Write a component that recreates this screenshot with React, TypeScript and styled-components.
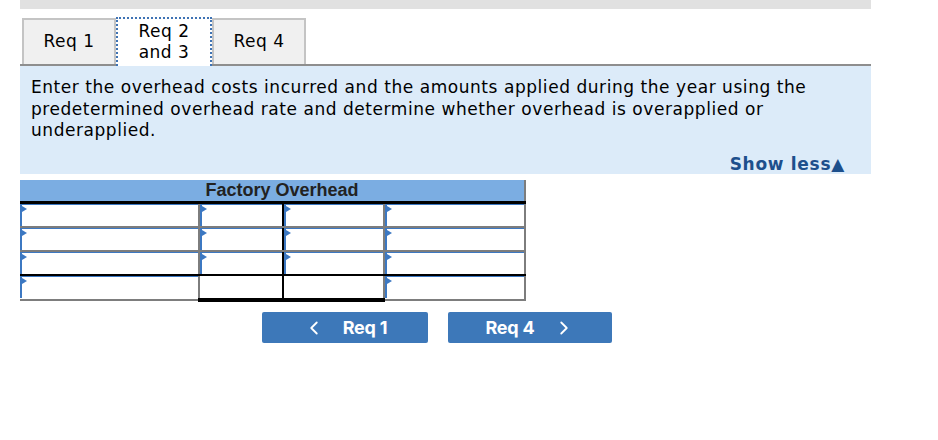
import React from 'react';
import styled, { createGlobalStyle } from 'styled-components';
import { ChevronLeft, ChevronRight } from 'lucide-react';

const GlobalStyle = createGlobalStyle`
	body {
		margin: 0;
		background: #ffffff;
		font-family: 'DejaVu Sans', Verdana, sans-serif;
	}
`;

type Cell = 'input' | 'blank';

const rows: { cells: Cell[]; strong?: boolean }[] = [
	{ cells: ['input', 'input', 'input', 'input'] },
	{ cells: ['input', 'input', 'input', 'input'] },
	{ cells: ['input', 'input', 'input', 'input'], strong: true },
	{ cells: ['input', 'blank', 'blank', 'input'] },
];

const colWidths = [179, 84, 101, 141];

const App: React.FC = () => {
	return (
		<Page>
			<GlobalStyle />
			<TopBar />
			<TabBar>
				<Tab>Req 1</Tab>
				<Tab active>
					Req 2
					<br />
					and 3
				</Tab>
				<Tab>Req 4</Tab>
			</TabBar>
			<InfoBox>
				<p>
					Enter the overhead costs incurred and the amounts applied during the
					year using the predetermined overhead rate and determine whether
					overhead is overapplied or underapplied.
				</p>
				<ShowLess>Show less▲</ShowLess>
			</InfoBox>

			<Ledger>
				<colgroup>
					{colWidths.map((w, i) => (
						<col key={i} style={{ width: w }} />
					))}
				</colgroup>
				<thead>
					<tr>
						<HeaderCell colSpan={4}>Factory Overhead</HeaderCell>
					</tr>
				</thead>
				<tbody>
					{rows.map((row, r) => (
						<tr key={r}>
							{row.cells.map((cell, c) => (
								<LedgerCell
									key={c}
									$divider={c === 1}
									$strong={row.strong}
									$total={cell === 'blank'}
								>
									{cell === 'input' && (
										<Field>
											<input type='text' />
										</Field>
									)}
								</LedgerCell>
							))}
						</tr>
					))}
				</tbody>
			</Ledger>

			<NavRow>
				<NavButton $width={166}>
					<ChevronLeft size={22} strokeWidth={2} />
					<span>Req 1</span>
				</NavButton>
				<NavButton $width={164}>
					<span>Req 4</span>
					<ChevronRight size={22} strokeWidth={2} />
				</NavButton>
			</NavRow>
		</Page>
	);
};

export default App;

const Page = styled.div`
	width: 851px;
	padding-left: 20px;
	min-height: 440px;
`;

const TopBar = styled.div`
	height: 9px;
	background: #e1e1e1;
`;

const TabBar = styled.div`
	display: flex;
	align-items: flex-end;
	margin-top: 8px;
	padding-left: 2px;
	border-bottom: 2px solid #8e8e8e;
	height: 47px;
`;

const Tab = styled.div<{ active?: boolean }>`
	box-sizing: border-box;
	width: ${({ active }) => (active ? '96px' : '94px')};
	height: ${({ active }) => (active ? '49px' : '46px')};
	margin-bottom: ${({ active }) => (active ? '-2px' : '0')};
	display: flex;
	align-items: center;
	justify-content: center;
	text-align: center;
	font-size: 17px;
	letter-spacing: 0.5px;
	line-height: 21px;
	color: #000;
	background: ${({ active }) => (active ? '#ffffff' : '#f0f0f0')};
	border: ${({ active }) =>
		active ? '2px dotted #3f73b4' : '2px solid #c4c4c4'};
	border-bottom: none;
	padding-bottom: 2px;
`;

const InfoBox = styled.div`
	background: #dcebf9;
	padding: 11px 26px 0 11px;
	height: 97px;
	display: flex;
	flex-direction: column;

	p {
		margin: 0;
		font-size: 17px;
		line-height: 21.5px;
		letter-spacing: 0.55px;
		color: #000;
	}
`;

const ShowLess = styled.div`
	margin-top: auto;
	align-self: flex-end;
	font-size: 17px;
	font-weight: bold;
	letter-spacing: 0.7px;
	color: #1d4f8c;
	line-height: 20px;
	margin-bottom: 0;
`;

const Ledger = styled.table`
	margin-top: 6px;
	width: 505px;
	border-collapse: collapse;
	table-layout: fixed;
	font-family: 'Liberation Sans', Arial, sans-serif;
`;

const HeaderCell = styled.th`
	height: 21px;
	padding: 0 0 0 20px;
	background: #7badE2;
	color: #222222;
	font-size: 18px;
	font-weight: bold;
	text-align: center;
	border-right: 2px solid #7d7d7d;
	border-bottom: 3px solid #000;
`;

const LedgerCell = styled.td<{
	$divider?: boolean;
	$strong?: boolean;
	$total?: boolean;
}>`
	height: 22px;
	padding: 0;
	background: #fff;
	border-right: 2px solid ${({ $divider }) => ($divider ? '#000' : '#7d7d7d')};
	border-bottom: ${({ $strong, $total }) =>
		$total ? '4px solid #000' : $strong ? '2px solid #000' : '2px solid #7d7d7d'};
	vertical-align: top;
`;

const Field = styled.span`
	position: relative;
	display: block;
	height: 22px;

	input {
		box-sizing: border-box;
		display: block;
		width: 100%;
		height: 22px;
		margin: 0;
		padding: 0 4px;
		border: none;
		border-left: 2px solid #3c78c2;
		border-top: 1px solid #3c78c2;
		background: #fff;
		outline: none;
	}

	&::before {
		content: '';
		position: absolute;
		left: 2px;
		top: 2px;
		border-left: 5px solid #3c78c2;
		border-top: 3px solid transparent;
		border-bottom: 3px solid transparent;
	}
`;

const NavRow = styled.div`
	display: flex;
	gap: 20px;
	margin-top: 10px;
	padding-left: 242px;
`;

const NavButton = styled.button<{ $width: number }>`
	width: ${({ $width }) => $width}px;
	height: 31px;
	display: flex;
	align-items: center;
	justify-content: center;
	gap: 18px;
	background: #3d78b9;
	color: #fff;
	border: none;
	border-radius: 2px;
	font-family: Inter, 'Liberation Sans', sans-serif;
	font-size: 18px;
	font-weight: 700;
	letter-spacing: -0.2px;
	cursor: pointer;
`;
